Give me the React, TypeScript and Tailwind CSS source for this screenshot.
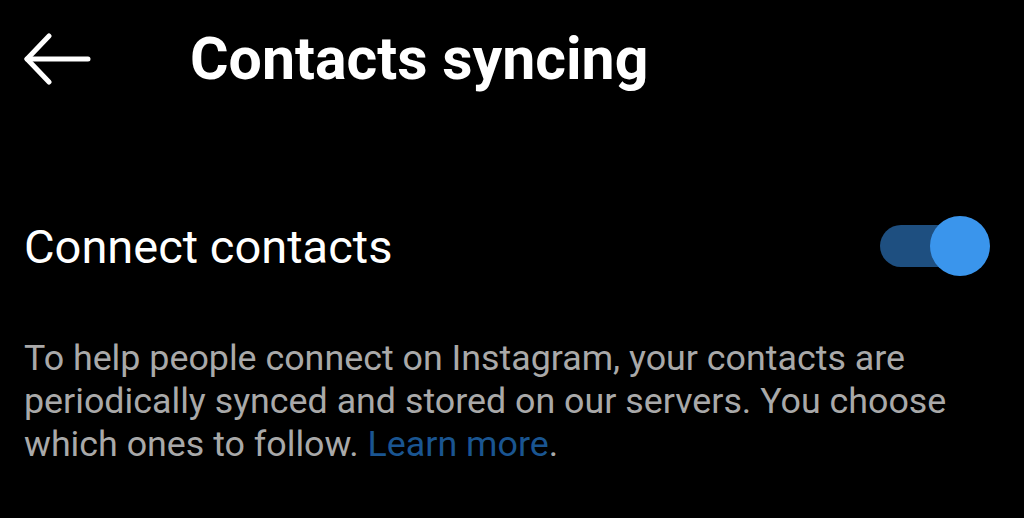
export default function App() {
  return (
    <div className="w-[1024px] h-[518px] bg-black text-white overflow-hidden" style={{ fontFamily: "Roboto, 'Noto Sans', sans-serif" }}>
      {/* Header */}
      <div className="flex items-center h-[118px] pl-[24px]">
        <svg width="68" height="52" viewBox="0 0 68 52" fill="none" stroke="white" strokeWidth="5" strokeLinecap="round" strokeLinejoin="round">
          <path d="M3 26 H64" />
          <path d="M25 3 L3 26 L25 49" />
        </svg>
        <h1 className="ml-[98px] text-[59px] font-bold leading-none -mt-[2px]">Contacts syncing</h1>
      </div>

      {/* Toggle row */}
      <div className="flex items-center justify-between pl-[24px] pr-[34px] mt-[98px]">
        <span className="text-[47px] leading-none">Connect contacts</span>
        <div className="relative w-[110px] h-[60px] flex items-center">
          <div className="w-[95px] h-[42px] rounded-full bg-[#1e4f80]" />
          <div className="absolute right-0 top-0 w-[60px] h-[60px] rounded-full bg-[#3a95ec]" />
        </div>
      </div>

      {/* Description */}
      <p className="pl-[24px] pr-[60px] mt-[61px] text-[35.8px] leading-[43px] text-[#a9a9a9]">
        To help people connect on Instagram, your contacts are periodically synced and stored on our servers. You choose which ones to follow. <span className="text-[#1a5591]">Learn more</span>.
      </p>
    </div>
  );
}
